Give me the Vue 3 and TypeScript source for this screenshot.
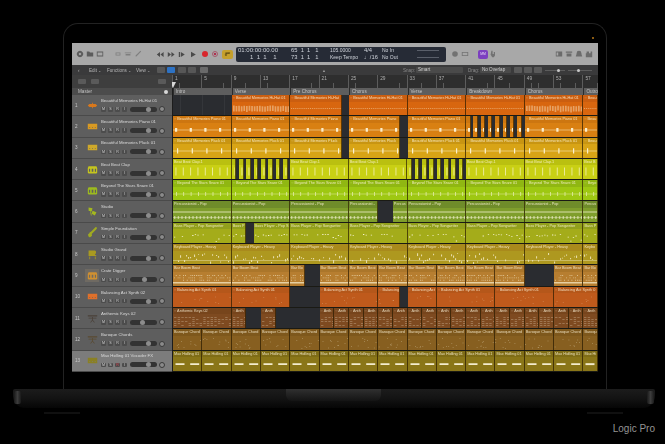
<template>
  <div class="page">
    <div class="lid">
      <span class="camera"></span>
      <div class="screen">
        <!-- top toolbar -->
        <header class="toolbar">
          <div class="tools tools-a">
            <svg v-for="d in leftIcons" :key="d" viewBox="0 0 10 10"><path :d="d" /></svg>
          </div>
          <div class="tools tools-b">
            <svg v-for="d in editIcons" :key="d" viewBox="0 0 10 10"><path :d="d" /></svg>
          </div>
          <div class="transport">
            <svg viewBox="0 0 10 8"><path d="M5 1 1 4l4 3zM9.500 1l-4 3 4 3z" /></svg>
            <svg viewBox="0 0 10 8"><path d="M1 1l4 3-4 3zM5.500 1l4 3-4 3z" /></svg>
            <svg viewBox="0 0 10 8"><path d="M1 1h1.500v6H1zM3.500 1l5 3-5 3z" /></svg>
            <svg viewBox="0 0 10 8"><path d="M2.500 .5l6 3.500-6 3.500z" /></svg>
            <span class="rec"></span>
            <span class="capture"></span>
            <span class="cycle"><svg viewBox="0 0 10 8"><path d="M2 2h6v1.500H3.500V5H5L2.800 7 .8 5H2zM7 1l2 1.500L7 4z" /></svg></span>
          </div>
          <div class="lcd">
            <span class="c-time">01:00:00:00.00</span>
            <span class="c-bar">65&nbsp; 1&nbsp; 1&nbsp;&nbsp; 1</span>
            <span class="c-tempo">105.0000</span>
            <span class="c-sig">4/4</span>
            <span class="c-io">No In</span>
            <span class="c-meter"><i></i></span>
            <span class="c-time right">1&nbsp; 1&nbsp; 1&nbsp;&nbsp;&nbsp; 1</span>
            <span class="c-bar">73&nbsp; 1&nbsp; 1&nbsp;&nbsp; 1</span>
            <span class="c-tempo">Keep Tempo</span>
            <span class="c-sig">♩/16</span>
            <span class="c-io">No Out</span>
            <span class="c-meter"><i></i></span>
          </div>
          <div class="tools tools-c">
            <svg viewBox="0 0 10 10"><circle cx="5" cy="5" r="3.500" /></svg>
            <svg viewBox="0 0 10 10"><path d="M1 2.500h8v5H1zM2 3.500v3h6v-3z" /></svg>
          </div>
          <span class="badge">MM</span>
          <div class="tools tools-d">
            <svg viewBox="0 0 10 10"><path d="M3 1h1.500v4H6V2.500h1.500V7L6 9H4L2 6z" /></svg>
          </div>
          <div class="tools tools-e">
            <svg v-for="d in rightIcons" :key="d" viewBox="0 0 10 10"><path :d="d" /></svg>
          </div>
        </header>

        <!-- menus -->
        <div class="menubar">
          <span class="back">‹</span>
          <span class="menu m-edit">Edit</span>
          <span class="menu m-fn">Functions</span>
          <span class="menu m-view">View</span>
          <span class="mode"></span>
          <span class="mode on"></span>
          <span class="mode wide"></span>
          <span class="mode"></span>
          <span class="mode last"></span>
          <span class="pointer">▲</span>
          <span class="label l-snap">Snap:</span>
          <span class="select s-snap">Smart</span>
          <span class="label">Drag:</span>
          <span class="select s-drag">No Overlap</span>
          <span class="mode small"></span>
          <span class="mode small"></span>
          <span class="mode small"></span>
          <span class="zoomer z-a"><i></i></span>
          <span class="zoomer z-b"><i></i></span>
        </div>

        <!-- ruler -->
        <div class="ruler-row">
          <div class="ruler-side">
            <span class="mini"></span>
            <span class="mini"></span>
            <span class="mini end"></span>
          </div>
          <div class="ruler">
            <span v-for="n in rulerMarks" :key="n" class="mark">{{ n }}</span>
            <span class="playhead"></span>
          </div>
        </div>

        <!-- markers -->
        <div class="marker-row">
          <div class="master">
            <span>Master</span>
            <span class="gear"></span>
          </div>
          <div class="markers">
            <span v-for="(s, i) in sections" :key="i" class="section">{{ s }}</span>
          </div>
        </div>

        <!-- tracks -->
        <div class="tracks">
          <div v-for="(t, i) in rows" :key="t.name" class="track">
            <div class="head" :class="{ selected: i === 12 }">
              <span class="num">{{ i + 1 }}</span>
              <span class="icon-box" :class="{ boxed: t.boxed }">
                <svg viewBox="0 0 14 14"><path :d="t.icon" :fill="t.tint" /></svg>
              </span>
              <div class="info">
                <span class="name">{{ t.name }}</span>
                <div class="controls">
                  <span class="btn">M</span>
                  <span class="btn">S</span>
                  <span class="btn" :class="{ armed: i === 12 }">R</span>
                  <span class="btn">I</span>
                  <span class="fader">
                    <i :style="{ left: t.fader + 'px' }"></i>
                  </span>
                  <span class="pan"></span>
                </div>
              </div>
            </div>
            <div class="lane">
              <template v-for="(r, k) in t.items" :key="k">
                <div
                  v-if="!r.empty"
                  class="region"
                  :style="{ width: r.width + 'px', background: t.body }"
                >
                  <span class="title" :style="{ background: t.top }">{{ r.title }}</span>
                  <svg class="notes"><path :d="r.d" :fill-opacity="r.alpha" /></svg>
                </div>
                <div v-else class="gap" :class="{ intro: r.width > 50 }" :style="{ width: r.width + 'px' }"></div>
              </template>
            </div>
          </div>
        </div>
      </div>
    </div>

    <div class="base">
      <span class="notch"></span>
    </div>
    <div class="feet"><i></i><i></i></div>
    <p class="caption">Logic Pro</p>
  </div>
</template>

<script setup lang="ts">
const BAR = 7.33
const TOTAL = 58

type Kind = 'hat' | 'hatBand' | 'blobs' | 'pluck' | 'clap' | 'snare' | 'perc' | 'melody' | 'keys' | 'beat' | 'sparse' | 'scatter' | 'stack' | 'vox'
type Span = [number, number]

interface TrackDef {
  name: string
  title: string
  icon: string
  tint: string
  top: string
  body: string
  fader: number
  kind: Kind
  spans: Span[]
  boxed?: boolean
}

const leftIcons = [
  'M5 1a4 4 0 1 0 .01 0zM5 3.500a1.500 1.500 0 1 1-.01 0z',
  'M1 2h3l1 1h4v5H1z',
  'M1 2h8v6H1zM2 3v4h6V3z',
]
const editIcons = [
  'M2 3h6v4H2zM3 4v2h4V4z',
  'M1 3h8v1H1zM2 5h6v2H2z',
  'M8 1 9 2 3 8H2V7z',
]
const rightIcons = [
  'M1 2h8v6H1zM2 3v4h2V3z',
  'M1 2h8v1.500H1zM2 4.500h6V8H2z',
  'M5 1a3 3 0 0 1 3 3c0 2 1 3 1 4H1c0-1 1-2 1-4a3 3 0 0 1 3-3z',
  'M2 2h3v2h2V2h2v7H1V4h1z',
]

const synth = 'M1 3.500h12v7H1zM3 8v1h1V8zm3.500 0v1h1V8zm3.500 0v1h1V8z'
const drum = 'M2 3h10l1 2v6l-1 1H2l-1-1V5zM2.500 6v4h1.500V6zm3.500 0v4h2V6zm4 0v4h1.500V6z'
const lozenge = 'M1 7 3 5h8l2 2-2 2H3zM6.500 3.500h1v7h-1z'
const bongos = 'M2 2l5 1-1 4-4-1zM7 6l5 2-2 4-4-2zM5 7l1 5H5L4 7z'
const guitar = 'M13 1l-1 2-6 6a2.500 2.500 0 1 1-3-1 2 2 0 0 1 2-2l6-6z'
const grand = 'M2 2h8c2 0 2 4 0 5 1 1 2 1 2 2H2zM3 9.500h1V13H3zM10 9.500h1V13h-1z'
const stand = 'M1 3h12v1.500H1zM2 6h10v1H2zM6.500 5h1v4l2.500 3H9L7 9.500 5 12H4l2.500-3z'

const fullRuns = (from: number, to: number, size: number): Span[] => {
  const out: Span[] = []
  for (let b = from; b < to; b += size) out.push([b, Math.min(b + size, to)])
  return out
}
// short pieces with a hole in each bar
const chop = (from: number, to: number, fill: number): Span[] => {
  const out: Span[] = []
  for (let b = from; b < to; b++) out.push([b, b + fill])
  return out
}

const defs: TrackDef[] = [
  {
    name: 'Beautiful Memories Hi-Hat 01', title: '◌ Beautiful Memories Hi-Hat 01', icon: lozenge, tint: '#d8781c',
    top: '#cb5e10', body: '#d8660f', fader: 16, kind: 'hat',
    spans: [[8, 16], [16, 23], [24, 32], [32, 40], [40, 48], [48, 56], [56, 58]],
  },
  {
    name: 'Beautiful Memories Piano 01', title: '◌ Beautiful Memories Piano 01', icon: synth, tint: '#d99a22',
    top: '#cd7610', body: '#d98012', fader: 16, kind: 'blobs',
    spans: [[0, 8], [8, 16], [16, 23], [24, 31], [32, 40], ...chop(40, 48, 0.6), [48, 56], [56, 58]],
  },
  {
    name: 'Beautiful Memories Pluck 01', title: '◌ Beautiful Memories Pluck 01', icon: synth, tint: '#cfa92a',
    top: '#c89512', body: '#d8a416', fader: 16, kind: 'pluck',
    spans: [[0, 8], [8, 16], [16, 23], [24, 31], [32, 40], [40, 48], [48, 56], [56, 58]],
  },
  {
    name: 'Beat Beat Clap', title: 'Beat Beat Clap.1', icon: drum, tint: '#c5c51e',
    top: '#bac010', body: '#c9d014', fader: 16, kind: 'clap',
    spans: [[0, 8], ...chop(8, 16, 0.64), [16, 24], [24, 32], ...chop(32, 40, 0.64), [40, 48], [48, 56], [56, 58]],
  },
  {
    name: 'Beyond The Stars Snare 01', title: '◌ Beyond The Stars Snare 01', icon: drum, tint: '#9dbb1e',
    top: '#90b712', body: '#9ec812', fader: 16, kind: 'snare',
    spans: fullRuns(0, 56, 8).concat([[56, 58]]),
  },
  {
    name: 'Studio', title: 'Percussionist - Pop', icon: bongos, tint: '#a4b81e',
    top: '#6f8c2a', body: '#7f9e2c', fader: 16, kind: 'perc',
    spans: [[0, 8], [8, 16], [16, 24], [24, 28], [30, 32], [32, 40], [40, 48], [48, 56], [56, 58]],
  },
  {
    name: 'Simple Foundation', title: 'Bass Player - Pop Songwriter', icon: guitar, tint: '#a0aa20',
    top: '#92a01c', body: '#a4ac1a', fader: 16, kind: 'melody',
    spans: [[0, 8], [8, 10], [11, 16], [16, 24], [24, 32], [32, 40], [40, 48], [48, 56], [56, 58]],
  },
  {
    name: 'Studio Grand', title: 'Keyboard Player - Heavy', icon: grand, tint: '#a99a20',
    top: '#a98a1c', body: '#ae981f', fader: 16, kind: 'keys',
    spans: fullRuns(0, 56, 8).concat([[56, 58]]),
  },
  {
    name: 'Crate Digger', title: 'Bar Boom Beat', icon: drum, tint: '#d09030', boxed: true,
    top: '#ab762a', body: '#b77e30', fader: 12, kind: 'beat',
    spans: [[0, 8], [8, 16], [16, 18], ...fullRuns(20, 48, 4), [52, 56], [56, 58]],
  },
  {
    name: 'Balancing Act Synth 02', title: '◌ Balancing Act Synth 01', icon: synth, tint: '#e0702a',
    top: '#b5571a', body: '#bf5a1c', fader: 16, kind: 'sparse',
    spans: [[0, 8], [8, 16], [20, 28], [28, 31], [32, 36], [36, 44], [44, 52], [52, 58]],
  },
  {
    name: 'Anthemic Keys 02', title: '◌ Anthemic Keys 02', icon: stand, tint: '#4a4038',
    top: '#77451c', body: '#7e4a20', fader: 10, kind: 'stack',
    spans: [[0, 8], [8, 10], [12, 14], ...fullRuns(20, 58, 2)],
  },
  {
    name: 'Baroque Chords', title: 'Baroque Chords', icon: stand, tint: '#5a4a30',
    top: '#7e581c', body: '#875f20', fader: 16, kind: 'scatter',
    spans: fullRuns(0, 58, 4),
  },
  {
    name: 'Max Hidling 01 Vocoder FX', title: 'Max Hidling 01 V', icon: synth, tint: '#8a8024',
    top: '#7f6d16', body: '#8a7618', fader: 16, kind: 'vox',
    spans: fullRuns(0, 58, 4),
  },
]

const alphaOf: Partial<Record<Kind, number>> = {
  hat: 0.8,
  hatBand: 0.4,
  sparse: 0.45,
  scatter: 0.6,
  stack: 0.5,
  beat: 0.65,
  keys: 0.7,
  clap: 0.7,
  snare: 0.7,
  perc: 0.7,
}

const rect = (x: number, y: number, w: number, h: number) =>
  `M${x.toFixed(1)} ${y.toFixed(1)}h${w.toFixed(1)}v${h.toFixed(1)}h${(-w).toFixed(1)}z`

// draws the little notes of one region, same seed gives same notes
const notesPath = (kind: Kind, w: number, seed: number): string => {
  let s = seed * 7919 + 13
  const rnd = () => {
    s = (s * 16807) % 2147483647
    return (s % 1000) / 1000
  }
  let d = ''
  if (kind === 'hat') {
    for (let x = 1; x < w; x += 1.9) d += rect(x, 6.5, 1, 0.6)
  } else if (kind === 'hatBand') {
    for (let x = 1; x < w; x += 2.6) d += rect(x, 3.5 + rnd(), 1.7, 6 - rnd())
  } else if (kind === 'blobs') {
    d += rect(0, 6.7, w, 0.5)
    for (let x = 2; x < w; x += 14.66) d += rect(x, 5, 2.2, 3.8)
  } else if (kind === 'pluck') {
    d += rect(0, 6.8, w, 0.4)
    for (let x = 4; x < w; x += 14.66) d += rect(x, 4.2, 1.2, 5.4)
  } else if (kind === 'clap') {
    for (let x = 2.5; x < w; x += 7.33) d += rect(x, 2.5, 0.9, 8)
  } else if (kind === 'snare') {
    d += rect(0, 6.8, w, 0.5)
    for (let x = 3; x < w; x += 7.33) d += rect(x, 5, 0.8, 4)
  } else if (kind === 'perc') {
    d += rect(0, 3.5, w, 1)
    d += rect(0, 9.3, w, 0.5)
    for (let x = 1; x < w; x += 3.66) d += rect(x, 8.3, 1.4, 2.4)
  } else if (kind === 'melody') {
    for (let x = 1; x < w; x += 2.6) {
      if (rnd() > 0.4) d += rect(x, 5 + ((x * 3) % 8) * rnd(), 1.3, 0.8)
    }
  } else if (kind === 'keys') {
    d += rect(0, 9, w, 0.5)
    for (let x = 1; x < w; x += 2) {
      if (rnd() > 0.4) d += rect(x, 2 + rnd() * 9, 1.1, 0.7 + rnd() * 2)
    }
  } else if (kind === 'beat') {
    for (let y = 3; y < 9; y += 2.4) {
      for (let x = 1; x < w; x += 1.83) {
        if (rnd() > 0.45) d += rect(x, y, 0.8, 0.9)
      }
    }
    d += rect(0, 10, w, 1.6)
  } else if (kind === 'sparse') {
    const n = w / 6
    for (let i = 0; i < n; i++) d += rect(rnd() * w, 3 + rnd() * 8, 0.9, 0.5)
  } else if (kind === 'scatter') {
    const n = w / 3
    for (let i = 0; i < n; i++) d += rect(rnd() * w, 2 + rnd() * 10, 0.8, 0.5)
  } else if (kind === 'stack') {
    for (let x = 1; x < w; x += 3.66) {
      for (let y = 3; y < 12; y += 2) {
        if (rnd() > 0.35) d += rect(x, y, 2.4, 0.5)
      }
    }
  } else {
    for (let x = 2.5; x < w; x += 14.66) d += rect(x, 6.2, 9, 1.9)
  }
  return d
}

// cut a title to what really fits in its region
const ctx = document.createElement('canvas').getContext('2d')
if (ctx) ctx.font = '3.8px "Liberation Sans"'
const fitTitle = (title: string, width: number) => {
  let t = title
  while (t && ctx && ctx.measureText(t).width > width - 2) t = t.slice(0, -1)
  return t
}

const rows = defs.map((t, ti) => {
  const items: { width: number; title: string; d: string; empty: boolean; alpha: number }[] = []
  let at = 0
  t.spans.forEach(([from, to], si) => {
    if (from > at) items.push({ width: (from - at) * BAR, title: '', d: '', empty: true, alpha: 0 })
    const width = (to - from) * BAR
    // the hi-hat gets its wider band in two places
    const kind: Kind = ti === 0 && (from === 8 || from === 48) ? 'hatBand' : t.kind
    const title = width < 6 ? '' : fitTitle(t.title, width)
    items.push({ width, title, d: notesPath(kind, width, ti * 40 + si + 1), empty: false, alpha: alphaOf[kind] ?? 0.9 })
    at = to
  })
  if (at < TOTAL) items.push({ width: (TOTAL - at) * BAR, title: '', d: '', empty: true, alpha: 0 })
  return { ...t, items }
})

const rulerMarks = Array.from({ length: 15 }, (_, i) => i * 4 + 1)
const sections = ['Intro', 'Verse', 'Pre Chorus', 'Chorus', 'Verse', 'Breakdown', 'Chorus', 'Outro']
</script>

<style scoped>
.page {
  width: 665px;
  height: 444px;
  overflow: hidden;
  background: #000;
  font-family: "Liberation Sans", Arial, sans-serif;
}

.lid {
  position: relative;
  box-sizing: border-box;
  width: 544px;
  height: 366px;
  margin: 23px 0 0 63px;
  padding: 19px 8px 0;
  border: 1px solid #222;
  border-bottom: 0;
  border-radius: 15px 15px 0 0;
}

.camera {
  position: absolute;
  top: 13px;
  right: 12px;
  width: 2px;
  height: 2px;
  background: #8a5a12;
}

.screen {
  width: 526px;
  height: 329px;
  overflow: hidden;
  background: #000;
  filter: blur(0.4px);
}

/* toolbar */
.toolbar {
  display: flex;
  align-items: center;
  height: 22px;
  background: #a8a8a8;
}

.tools {
  display: flex;
  align-items: center;
  gap: 2px;
}

.tools svg {
  width: 8px;
  height: 8px;
  fill: #5c5c5c;
}

.tools-a {
  margin-left: 4px;
}

.tools-b {
  margin-left: 10px;
  opacity: 0.55;
}

.transport {
  display: flex;
  align-items: center;
  gap: 3px;
  margin-left: 14px;
}

.transport > svg {
  width: 8px;
  height: 7px;
  fill: #4a4a4a;
}

.rec {
  width: 6px;
  height: 6px;
  border-radius: 50%;
  background: #d8262c;
  margin-left: 2px;
}

.capture {
  width: 6px;
  height: 6px;
  margin-left: 1px;
  border-radius: 50%;
  border: 1px solid #a65a6c;
  background: radial-gradient(#b03050 30%, #a6a6a6 35%);
  box-sizing: border-box;
}

.cycle {
  display: flex;
  align-items: center;
  justify-content: center;
  width: 11px;
  height: 9px;
  margin-left: 1px;
  border-radius: 2px;
  background: #c6a02c;
}

.cycle svg {
  width: 7px;
  height: 6px;
  fill: #5a4610;
}

.lcd {
  display: grid;
  grid-template-columns: 53px 39px 34px 18px 35px 1fr;
  grid-template-rows: 7px 7px;
  align-items: center;
  flex: none;
  width: 210px;
  height: 15px;
  margin-left: 3px;
  padding-left: 2px;
  box-sizing: border-box;
  border-radius: 2px;
  background: #262b36;
  color: #cfd3da;
  font-size: 5.8px;
  line-height: 7px;
  white-space: nowrap;
}

.c-time {
  font-size: 6px;
}

.c-time.right {
  padding-left: 12px;
}

.c-tempo,
.c-io {
  font-size: 5px;
}

.c-meter i {
  display: block;
  width: 22px;
  height: 1px;
  background: #5a5f6a;
}

.tools-c {
  margin-left: 5px;
  opacity: 0.7;
}

.badge {
  width: 10px;
  height: 9px;
  margin-left: 9px;
  border-radius: 2px;
  background: #7c3fc0;
  color: #e6d6f6;
  font-size: 3.4px;
  line-height: 9px;
  text-align: center;
}

.tools-d {
  margin-left: 1px;
  opacity: 0.7;
}

.tools-e {
  margin-left: 58px;
  opacity: 0.8;
}

/* menus */
.menubar {
  display: flex;
  align-items: center;
  height: 10px;
  background: #3a3a3b;
  color: #b4b4b4;
  font-size: 4.6px;
  white-space: nowrap;
}

.back {
  margin-left: 6px;
  width: 9px;
}

.menu::after {
  content: " ⌄";
  font-size: 3.5px;
}

.m-edit {
  width: 17px;
  margin-left: 2px;
}

.m-fn {
  width: 28px;
  margin-left: 1px;
}

.m-view {
  width: 19px;
  margin-left: 1px;
}

.mode {
  flex: none;
  width: 8px;
  height: 6px;
  margin-left: 2px;
  border-radius: 1px;
  background: #575757;
}

.mode.on {
  background: #2d72c4;
}

.mode.wide {
  margin-left: 3px;
}

.mode.last {
  margin-left: 4px;
  background: #6a6a6a;
}

.mode.small {
  margin-left: 3px;
  background: #5a5a5a;
}

.mode.small + .mode.small {
  margin-left: 2px;
}

.pointer {
  margin-left: 114px;
  font-size: 4px;
  color: #9a9a9a;
}

.label {
  flex: none;
  width: 10px;
  margin-left: 5px;
  color: #8a8a8a;
}

.l-snap {
  width: 11px;
  margin-left: 77px;
}

.select {
  flex: none;
  box-sizing: border-box;
  height: 6px;
  margin-left: 2px;
  padding-left: 2px;
  border-radius: 1px;
  background: #4a4a4a;
  color: #d0d0d0;
  line-height: 6px;
}

.s-snap {
  width: 47px;
}

.s-drag {
  width: 31px;
}

.zoomer {
  position: relative;
  flex: none;
  height: 1px;
  margin-left: 3px;
  background: #5c5c5c;
}

.z-a {
  width: 20px;
}

.z-b {
  width: 24px;
}

.zoomer i {
  position: absolute;
  top: -1px;
  width: 3px;
  height: 3px;
  border-radius: 50%;
  background: #c8c8c8;
}

.z-a i {
  left: 12px;
}

.z-b i {
  left: 9px;
}

/* ruler */
.ruler-row {
  display: flex;
  height: 13px;
}

.ruler-side {
  display: flex;
  align-items: center;
  flex: 0 0 100px;
  gap: 5px;
  box-sizing: border-box;
  padding-left: 6px;
  background: #3e3e3e;
}

.mini {
  width: 8px;
  height: 5px;
  border-radius: 1px;
  background: #5a5a5a;
}

.mini.end {
  margin-left: auto;
  margin-right: 6px;
}

.ruler {
  position: relative;
  display: flex;
  flex: 1;
  min-width: 0;
  overflow: hidden;
  background:
    repeating-linear-gradient(90deg, #5c5c5c 0 0.5px, transparent 0.5px 7.33px) 0 100% / 100% 5px no-repeat,
    #2e2e2e;
}

.mark {
  flex: 0 0 29.32px;
  padding-left: 2px;
  box-sizing: border-box;
  border-left: 0.5px solid #5c5c5c;
  height: 13px;
  color: #b0b0b0;
  font-size: 4.8px;
  line-height: 7px;
}

.playhead {
  position: absolute;
  left: -2px;
  top: 7px;
  width: 0;
  height: 0;
  border-left: 3px solid transparent;
  border-right: 3px solid transparent;
  border-top: 6px solid #d8d8d8;
}

/* marker row */
.marker-row {
  display: flex;
  height: 7px;
  color: #c4c4c4;
  font-size: 4.6px;
  line-height: 7px;
}

.master {
  display: flex;
  align-items: center;
  justify-content: space-between;
  flex: 0 0 101px;
  box-sizing: border-box;
  padding: 0 4px 0 6px;
  background: #4c4c4c;
  border-right: 1px solid #1e1e1e;
}

.gear {
  width: 4px;
  height: 4px;
  border-radius: 50%;
  background: #d8d8d8;
}

.markers {
  display: flex;
  flex: 1;
  min-width: 0;
  overflow: hidden;
  background: #5e5e5e;
}

.section {
  flex: 0 0 58.64px;
  box-sizing: border-box;
  padding-left: 2px;
  border-left: 1px solid #2c2c2c;
}

/* tracks */
.tracks {
  display: flex;
  flex-direction: column;
}

.track {
  display: flex;
  height: 21.3px;
}

.head {
  display: flex;
  align-items: center;
  flex: 0 0 100px;
  box-sizing: border-box;
  border-bottom: 0.5px solid #4a4a4a;
  background: #5e5e5e;
}

.head.selected {
  background: #7c7c7c;
}

.num {
  width: 12px;
  padding-left: 3px;
  box-sizing: border-box;
  color: #c8c8c8;
  font-size: 4.6px;
}

.icon-box {
  display: flex;
  align-items: center;
  justify-content: center;
  width: 14px;
  height: 13px;
  margin-left: 1px;
}

.icon-box svg {
  width: 11px;
  height: 11px;
}

.icon-box.boxed {
  background: #6f6a62;
}

.info {
  display: flex;
  flex-direction: column;
  gap: 2.500px;
  width: 66px;
  margin-left: 2px;
}

.name {
  color: #dadada;
  font-size: 4.300px;
  line-height: 6px;
  white-space: nowrap;
}

.controls {
  display: flex;
  align-items: center;
  gap: 2px;
}

.btn {
  flex: none;
  width: 5px;
  height: 4.500px;
  border-radius: 1px;
  background: #4c4c4c;
  color: #cfcfcf;
  font-size: 3.600px;
  line-height: 4.500px;
  text-align: center;
}

.btn.armed {
  color: #e04050;
}

.fader {
  position: relative;
  flex: none;
  width: 27px;
  height: 5px;
  margin-left: 1px;
  border-radius: 3px;
  background: #333;
}

.fader i {
  position: absolute;
  top: 0;
  width: 5px;
  height: 5px;
  border-radius: 50%;
  background: #8c8c8c;
}

.pan {
  flex: none;
  box-sizing: border-box;
  width: 6px;
  height: 6px;
  border: 1px solid #3a3a3a;
  border-radius: 50%;
  background: #8a8a8a;
}

.lane {
  display: flex;
  flex: 1;
  min-width: 0;
  overflow: hidden;
  box-sizing: border-box;
  border-left: 1px solid #1c1c1c;
  border-bottom: 1px solid #1a1a14;
  background: #2a2c30;
}

.gap {
  flex: none;
  background: #2a2c30;
}

.gap.intro {
  background: repeating-linear-gradient(90deg, #34363a 0 0.5px, #2a2c30 0.5px 7.33px);
}

.region {
  display: flex;
  flex-direction: column;
  flex: none;
  overflow: hidden;
  box-sizing: border-box;
  border-right: 0.5px solid rgba(40, 25, 0, 0.7);
}

.title {
  flex: 0 0 6.500px;
  padding-left: 1px;
  overflow: hidden;
  color: rgba(255, 246, 220, 0.8);
  font-size: 3.800px;
  line-height: 6.500px;
  white-space: nowrap;
}

.notes {
  flex: 1;
  width: 100%;
  min-height: 0;
  fill: #fffae1;
}

/* base of the laptop */
.base {
  position: relative;
  display: flex;
  justify-content: center;
  width: 642px;
  height: 19px;
  margin-left: 13px;
  border-radius: 2px 2px 12px 12px;
  background: linear-gradient(#1c1c1c, #131313 50%, #060606);
}

.base::before,
.base::after {
  content: "";
  position: absolute;
  top: 2px;
  width: 7px;
  height: 13px;
  border-radius: 2px;
  background: linear-gradient(90deg, #1a1a1a, #3c3c3c, #1a1a1a);
}

.base::before {
  left: 1px;
}

.base::after {
  right: 1px;
}

.notch {
  width: 95px;
  height: 12px;
  margin-left: -2px;
  border-radius: 0 0 6px 6px;
  background: linear-gradient(#303030, #1c1c1c 70%, #141414);
}

.feet {
  display: flex;
  justify-content: space-between;
  width: 579px;
  height: 2px;
  margin: 4px 0 0 44px;
}

.feet i {
  width: 36px;
  height: 2px;
  background: #101010;
}

.caption {
  margin: 9px 10px 0 0;
  color: #949494;
  font-size: 10px;
  line-height: 12px;
  text-align: right;
}
</style>
